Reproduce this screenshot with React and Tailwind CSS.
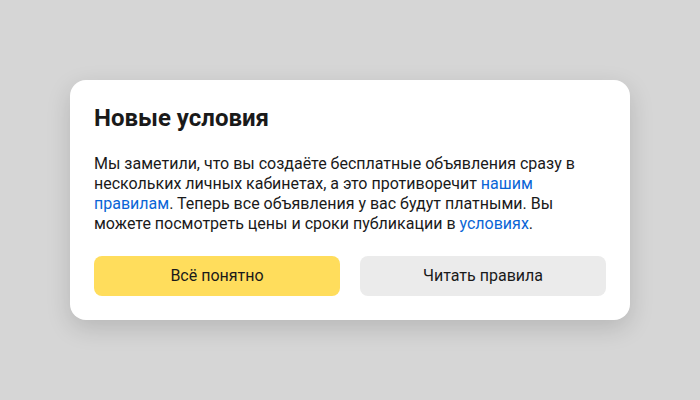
import React from "react";

const NewTermsDialog = () => {
  return (
    <div
      className="w-[700px] h-[400px] bg-[#d6d6d6] flex items-center justify-center"
      style={{ fontFamily: '"Roboto", "Noto Sans", sans-serif' }}
    >
      <div className="w-[560px] bg-white rounded-2xl px-6 pt-6 pb-6 shadow-[0_8px_24px_rgba(0,0,0,0.15)]">
        <h2 className="text-[24px] leading-7 font-bold text-[#1a1a1a]">Новые условия</h2>

        <p className="mt-[22px] text-[16px] leading-5 text-[#1a1a1a]">
          Мы заметили, что вы создаёте бесплатные объявления сразу в нескольких личных
          кабинетах, а это противоречит{" "}
          <a className="text-[#0a65d6]">нашим правилам</a>. Теперь все объявления у вас
          будут платными. Вы можете посмотреть цены и сроки публикации в{" "}
          <a className="text-[#0a65d6]">условиях</a>.
        </p>

        <div className="mt-[22px] grid grid-cols-2 gap-5">
          <button className="h-10 rounded-lg bg-[#ffdd5c] text-[16px] text-[#1a1a1a]">
            Всё понятно
          </button>
          <button className="h-10 rounded-lg bg-[#ebebeb] text-[16px] text-[#1a1a1a]">
            Читать правила
          </button>
        </div>
      </div>
    </div>
  );
};

export default function App() {
  return <NewTermsDialog />;
}
